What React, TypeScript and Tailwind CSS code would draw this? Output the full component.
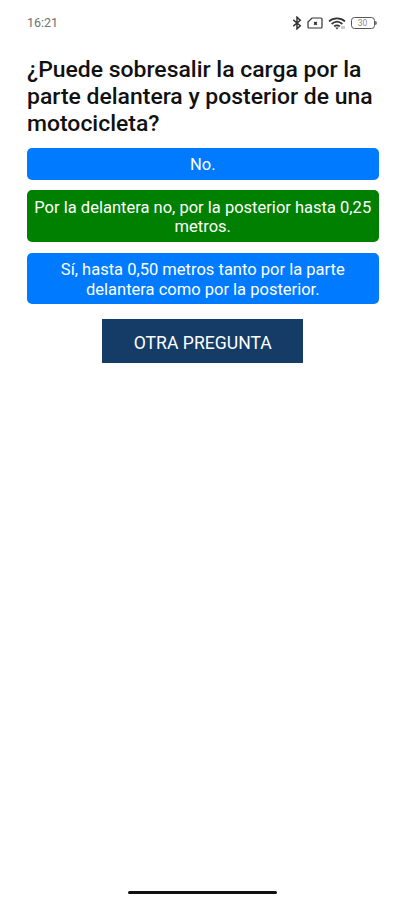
interface Answer {
  text: string
  correct: boolean
}

const answers: Answer[] = [
  { text: 'No.', correct: false },
  { text: 'Por la delantera no, por la posterior hasta 0,25 metros.', correct: true },
  { text: 'Sí, hasta 0,50 metros tanto por la parte delantera como por la posterior.', correct: false },
]

function StatusBar() {
  return (
    <div className="flex h-[46px] items-center justify-between pl-[27px] pr-[27.5px]">
      <span className="text-[12.5px] leading-none text-[#707070]">16:21</span>
      <div className="flex items-center text-[#333]">
        <svg className="h-[14px] w-[10px]" viewBox="0 0 10 15" fill="none" stroke="currentColor" strokeWidth="1.6">
          <path d="M1 4.2 8.5 10.5 5 13.8V1.2L8.5 4.5 1 10.8" />
        </svg>
        <svg className="ml-[5px] h-[12px] w-[16px]" viewBox="0 0 16 12" fill="none" stroke="currentColor" strokeWidth="1.2">
          <path d="M5 1H14A1 1 0 0 1 15 2V10A1 1 0 0 1 14 11H2A1 1 0 0 1 1 10V5Z" />
          <path d="M7.2 5.1 9.8 7.7M9.8 5.1 7.2 7.7" strokeWidth="1.5" />
        </svg>
        <svg className="ml-[5px] h-[13px] w-[18px]" viewBox="0 0 18 13" fill="none" stroke="currentColor" strokeWidth="1.7">
          <path d="M1 4.4C5.5 .3 12.5 .3 17 4.4" />
          <path d="M3.6 7C7 4.1 11 4.1 14.4 7" />
          <path d="M6.1 9.4C8 7.9 10 7.9 11.9 9.4" />
          <path d="M7.3 10.5h3.4L9 12.6Z" fill="currentColor" stroke="none" />
          <path d="M14 9v3M16 9v3" stroke="#999" strokeWidth="1" />
        </svg>
        <div className="ml-[5px] flex items-center">
          <div className="flex h-[12px] w-[24px] items-center justify-center rounded-[3.5px] border border-[#555] text-[8.5px] leading-none text-[#888]">
            30
          </div>
          <div className="h-[4px] w-[2px] rounded-r-full bg-[#777]" />
        </div>
      </div>
    </div>
  )
}

function AnswerButton({ answer }: { answer: Answer }) {
  return (
    <button
      className={`w-full rounded-[5px] px-[6px] pt-[7.2px] pb-[4.8px] text-center text-[16.53px] leading-[19.8px] text-white ${
        answer.correct ? 'bg-[#008000]' : 'bg-[#007bff]'
      }`}
    >
      {answer.text}
    </button>
  )
}

export default function App() {
  return (
    <div className="flex h-[900px] w-[404px] flex-col bg-white font-[Roboto,sans-serif]">
      <StatusBar />
      <main className="flex flex-1 flex-col pt-[10px] pr-[25.5px] pl-[27px]">
        <h1 className="text-[22.95px] leading-[27px] font-medium text-[#111]">
          ¿Puede sobresalir la carga por la parte delantera y posterior de una motocicleta?
        </h1>
        <div className="mt-[11px] flex flex-col gap-[10.7px]">
          {answers.map((answer) => (
            <AnswerButton key={answer.text} answer={answer} />
          ))}
        </div>
        <button className="mt-[15px] h-[44px] w-[201px] self-center bg-[#143c66] pt-[3px] text-[17.6px] text-white">
          OTRA PREGUNTA
        </button>
      </main>
      <div className="mb-[6px] h-[3px] w-[149px] self-center rounded-full bg-[#111]" />
    </div>
  )
}
